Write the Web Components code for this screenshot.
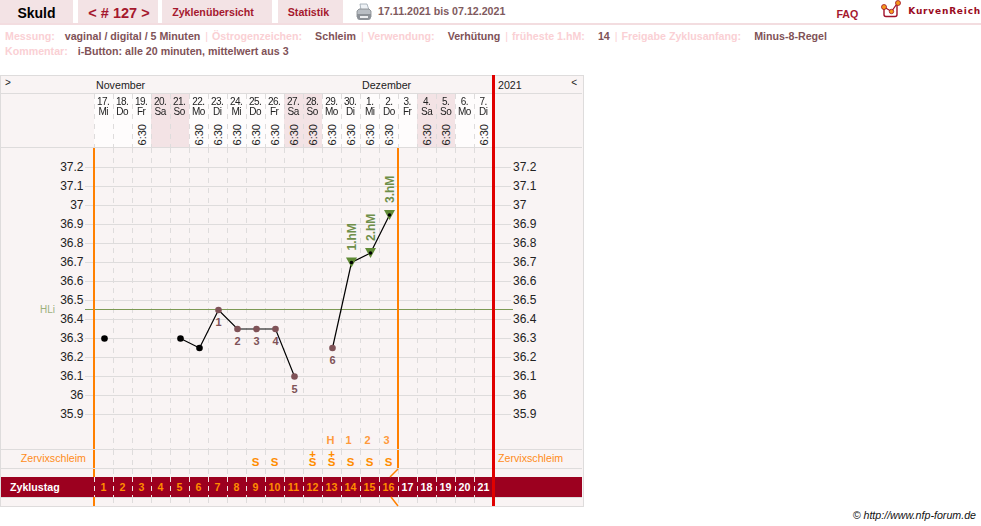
<!DOCTYPE html>
<html lang="de">
<head>
<meta charset="utf-8">
<title>Skuld</title>
<style>
    html, body { margin: 0; background: #fff; font-family: "Liberation Sans", Arial, sans-serif; }
</style>
</head>
<body>
<top-bar></top-bar>
<info-line>
    <info-item tight label="Messung:" value="vaginal / digital / 5 Minuten"></info-item>
    <info-item label="Östrogenzeichen:" value="Schleim"></info-item>
    <info-item label="Verwendung:" value="Verhütung"></info-item>
    <info-item label="früheste 1.hM:" value="14"></info-item>
    <info-item label="Freigabe Zyklusanfang:" value="Minus-8-Regel" last></info-item>
    <br>
    <info-item tight label="Kommentar:" value="i-Button: alle 20 minuten, mittelwert aus 3" last></info-item>
</info-line>
<cycle-chart></cycle-chart>
<page-footer>© http://www.nfp-forum.de</page-footer>

<script>
class NavTab extends HTMLElement {
    constructor() {
        super();
        this.attachShadow({ mode: "open" });
        this.shadowRoot.innerHTML = `
            <style>
                :host {
                    display: flex;
                    align-items: center;
                    justify-content: center;
                    height: 23px;
                    background: #f3e3e5;
                    color: #a5182e;
                    font-size: 10.67px;
                    font-weight: bold;
                    box-sizing: border-box;
                    padding-top: 1px;
                }
            </style>
            <slot></slot>
        `;
    }
}
customElements.define("nav-tab", NavTab);

class TopBar extends HTMLElement {
    constructor() {
        super();
        this.attachShadow({ mode: "open" });
        this.shadowRoot.innerHTML = `
            <style>
                :host {
                    display: flex;
                    align-items: center;
                    height: 23px;
                    border-bottom: 2px solid #f3dde0;
                    width: 981px;
                }
                .skuld { width: 73px; margin-right: 5px; color: #000; font-size: 14px; padding-top: 3px; }
                .cycle { width: 80px; margin-right: 4px; font-size: 14.5px; padding: 3px 0 0 2px; }
                .overview { width: 110px; margin-right: 6px; padding-right: 8px; }
                .stats { width: 65px; margin-right: 12px; padding-right: 4px; }
                .printer { display: block; width: 18px; height: 18px; margin-right: 5px; }
                .range { color: #7f5a5e; font-size: 10.67px; font-weight: bold; padding-bottom: 1px; }
                .faq { margin-left: auto; margin-right: 23px; padding-top: 5px; color: #a5182e; font-size: 10.67px; font-weight: bold; }
                .logo { display: block; width: 22px; height: 20px; margin-right: 5px; align-self: flex-start; }
                .brand { padding-bottom: 2px; color: #9a0b22; font-family: "DejaVu Sans", sans-serif; font-size: 9px; font-weight: bold; letter-spacing: .8px; }
            </style>
            <nav-tab class="skuld">Skuld</nav-tab>
            <nav-tab class="cycle">&lt; # 127 &gt;</nav-tab>
            <nav-tab class="overview">Zyklenübersicht</nav-tab>
            <nav-tab class="stats">Statistik</nav-tab>
            <svg class="printer" viewBox="0 0 18 18">
                <path d="M5 1h7l2 6H6z" fill="#eef2f6" stroke="#9aa6b0" stroke-width=".8"/>
                <path d="M2 8l2-2h10l2 2v6H2z" fill="#b9bec4" stroke="#80868c" stroke-width=".8"/>
                <path d="M2 11h14v3a3 3 0 0 1-3 3H5a3 3 0 0 1-3-3z" fill="#8d9298"/>
                <path d="M5 13h8v2H5z" fill="#eceef0"/>
            </svg>
            <span class="range">17.11.2021 bis 07.12.2021</span>
            <span class="faq">FAQ</span>
            <svg class="logo" viewBox="0 0 22 20">
                <path d="M3 8v6.500q0 2 2 2h9q2 0 2-2V5" fill="#fff" stroke="#a0102a" stroke-width="1.400"/>
                <path d="M3 7l7.500 4.500L16.500 3" fill="none" stroke="#a0102a" stroke-width="1.300"/>
                <circle cx="3" cy="7" r="2.500" fill="#f59a1c" stroke="#a0102a" stroke-width=".8"/>
                <circle cx="10.500" cy="11.500" r="2.200" fill="#f59a1c" stroke="#a0102a" stroke-width=".8"/>
                <circle cx="17" cy="3" r="2.500" fill="#f59a1c" stroke="#a0102a" stroke-width=".8"/>
            </svg>
            <span class="brand">KurvenReich</span>
        `;
    }
}
customElements.define("top-bar", TopBar);

class InfoLine extends HTMLElement {
    constructor() {
        super();
        this.attachShadow({ mode: "open" });
        this.shadowRoot.innerHTML = `
            <style>
                :host {
                    display: block;
                    height: 50px;
                    padding: 4px 0 0 5px;
                    box-sizing: border-box;
                    font-size: 10.67px;
                    font-weight: bold;
                    line-height: 15px;
                    white-space: nowrap;
                }
            </style>
            <slot></slot>
        `;
    }
}
customElements.define("info-line", InfoLine);

class InfoItem extends HTMLElement {
    constructor() {
        super();
        this.attachShadow({ mode: "open" });
        this.shadowRoot.innerHTML = `
            <style>
                :host { display: inline; }
                .label { color: #fad0d4; margin-right: 13px; }
                :host([tight]) .label { margin-right: 10px; }
                .value { color: #7f5257; }
                .sep { color: #fad0d4; font-weight: normal; margin: 0 1px 0 5px; }
            </style>
            <span class="label"></span><span class="value"></span><span class="sep">|</span>
        `;
    }

    connectedCallback() {
        this.shadowRoot.querySelector(".label").textContent = this.getAttribute("label");
        this.shadowRoot.querySelector(".value").textContent = this.getAttribute("value");
        if (this.hasAttribute("last")) {
            this.shadowRoot.querySelector(".sep").style.display = "none";
        }
    }
}
customElements.define("info-item", InfoItem);

const DAYS = [
    ["17.", "Mi", 0], ["18.", "Do", 0], ["19.", "Fr", 1], ["20.", "Sa", 0], ["21.", "So", 0],
    ["22.", "Mo", 1], ["23.", "Di", 1], ["24.", "Mi", 1], ["25.", "Do", 1], ["26.", "Fr", 1],
    ["27.", "Sa", 1], ["28.", "So", 1], ["29.", "Mo", 1], ["30.", "Di", 1], ["1.", "Mi", 1],
    ["2.", "Do", 1], ["3.", "Fr", 0], ["4.", "Sa", 1], ["5.", "So", 1], ["6.", "Mo", 0], ["7.", "Di", 1],
];

// day index, temperature, label under the point
const SERIES = [
    [[0, 36.3]],
    [[4, 36.3], [5, 36.25], [6, 36.45, "1"], [7, 36.35, "2"], [8, 36.35, "3"], [9, 36.35, "4"], [10, 36.1, "5"]],
    [[12, 36.25, "6"], [13, 36.7, "1.hM"], [14, 36.75, "2.hM"], [15, 36.95, "3.hM"]],
];

const MUCUS = { 8: "S", 9: "S", 11: "+\nS", 12: "+\nS", 13: "S", 14: "S", 15: "S" };

const dayX = (i) => 104.5 + 19 * i;
const tempY = (t) => 167.5 + (37.2 - t) * 190;

function plotSvg() {
    let out = "";
    for (let k = 0; k < 14; k++) {
        const y = 167 + 19 * k;
        const t = (37.2 - k / 10).toFixed(1).replace(/\.0$/, "");
        out += `<path d="M85 ${y + .5}H511" stroke="#dedcdc"/>`;
        out += `<text x="83.500" y="${y + 4}" text-anchor="end" class="t">${t}</text>`;
        out += `<text x="513" y="${y + 4}" class="t">${t}</text>`;
    }
    for (let i = 1; i < 21; i++) {
        const x = 94 + 19 * i + .5;
        out += `<path d="M${x} 148V449" stroke="#dedcdc" stroke-dasharray="5 5"/>`;
    }
    out += `<path d="M85 309.500H513" stroke="#7d9a55"/>`;
    out += `<text x="40" y="313" class="hli">HLi</text>`;

    SERIES.forEach((s) => {
        if (s.length > 1) {
            const pts = s.map((p) => `${dayX(p[0])},${tempY(p[1])}`).join(" ");
            out += `<polyline points="${pts}" fill="none" stroke="#000" stroke-width="1.200"/>`;
        }
        s.forEach((p) => {
            const x = dayX(p[0]);
            const y = tempY(p[1]);
            const name = p[2];
            if (!name) {
                out += `<circle cx="${x}" cy="${y}" r="3.300" fill="#000"/>`;
            } else if (name.includes("hM")) {
                out += `<path d="M${x - 5.5} ${y - 5}h11l-5.500 10z" fill="#5f8a35"/>`;
                out += `<circle cx="${x}" cy="${y}" r="1.800" fill="#000"/>`;
                out += `<text transform="translate(${x + 4} ${y - 12}) rotate(-90)" class="hm">${name}</text>`;
            } else {
                out += `<circle cx="${x}" cy="${y}" r="3.300" fill="#7f5257"/>`;
                out += `<text x="${x}" y="${y + 16}" text-anchor="middle" class="n">${name}</text>`;
            }
        });
    });

    [["H", 12, 2], ["1", 13, 3], ["2", 14, 3], ["3", 15, 3]].forEach(([c, i, off]) => {
        out += `<text x="${dayX(i) - off}" y="444" text-anchor="middle" class="peak">${c}</text>`;
    });
    return out;
}

class CycleChart extends HTMLElement {
    constructor() {
        super();
        this.attachShadow({ mode: "open" });
        const heads = DAYS.map(([d, w, time]) => {
            const weekend = w == "Sa" || w == "So";
            return `<div class="day${weekend ? " weekend" : ""}"><div class="date">${d}<br>${w}</div>${time ? "<span>6:30</span>" : ""}</div>`;
        }).join("");
        const mucus = DAYS.map((_, i) => {
            const v = MUCUS[i] || "";
            return `<div class="cell mucus${v == "S" ? " single" : ""}">${v}</div>`;
        }).join("");
        const blanks = DAYS.map(() => `<div class="cell"></div>`).join("");
        const numbers = DAYS.map((_, i) => `<div class="num${i > 15 ? " white" : ""}">${i + 1}</div>`).join("");

        this.shadowRoot.innerHTML = `
            <style>
                :host {
                    display: block;
                    position: relative;
                    width: 584px;
                    height: 432px;
                    box-sizing: border-box;
                    border: 1px solid #dedcdc;
                    background: #f9f4f4;
                    color: #222;
                    font-size: 10.67px;
                }
                .grid {
                    display: grid;
                    grid-template-columns: 93px repeat(21, 19px) 89px;
                    grid-template-rows: 17px 1px 53px 1px 301px 1px 18px 1px 8px 20px 1px 9px;
                }
                .rule { grid-column: 1 / -1; background: #dedcdc; }
                .month { grid-column: span 14; padding-left: 2px; line-height: 18px; }
                .month.dec { grid-column: span 7; }
                .edge { padding-left: 4px; line-height: 14px; font-size: 10px; }
                .edge.year { display: flex; justify-content: space-between; padding: 0 5px 0 5px; line-height: 18px; font-size: 10.67px; }
                .edge.year b { font-weight: normal; font-size: 10px; line-height: 14px; }
                .day {
                    background-color: #fefcfc;
                    text-align: center;
                    line-height: 10px;
                    font-size: 10px;
                    letter-spacing: -.5px;
                    padding-top: 3px;
                    box-sizing: border-box;
                    display: flex;
                    flex-direction: column;
                    align-items: center;
                    justify-content: space-between;
                }
                .date { will-change: transform; }
                .day, .cell {
                    background-image: repeating-linear-gradient(#dedcdc 0 5px, transparent 5px 10px);
                    background-size: 1px 100%;
                    background-repeat: no-repeat;
                }
                .day.weekend { background-color: #f3e3e5; }
                .day span {
                    writing-mode: vertical-rl;
                    transform: rotate(180deg);
                    font-size: 11px;
                    letter-spacing: 0;
                    line-height: 11px;
                    margin: 0 0 2px 1px;
                }
                .plot { grid-column: 1 / -1; display: block; width: 582px; height: 301px; }
                .plot .t { font-size: 12px; fill: #222; }
                .plot .hli { font-size: 10px; fill: #7d9a55; opacity: .75; }
                .plot .n { font-size: 11px; fill: #7f5257; font-weight: bold; }
                .plot .hm { font-size: 12px; fill: #6f8f4a; font-weight: bold; }
                .plot .peak { font-size: 11px; fill: #ff9a3c; font-weight: bold; }
                .label { color: #ff8c1a; text-align: right; padding-right: 8px; line-height: 16px; }
                .label.right { text-align: left; padding: 0 0 0 5px; }
                .mucus {
                    color: #ff8c00;
                    font-size: 11.5px;
                    font-weight: bold;
                    line-height: 8px;
                    text-align: center;
                    white-space: pre;
                    box-sizing: border-box;
                }
                .mucus.single { padding-top: 8px; }
                .bar { background: #9c001f; }
                .title { color: #fff; font-weight: bold; line-height: 20px; padding-left: 9px; }
                .num {
                    background: #9c001f repeating-linear-gradient(#efe6e6 0 5px, transparent 5px 9px) left / 1px 100% no-repeat;
                    color: #ff8c00;
                    font-weight: bold;
                    line-height: 20px;
                    text-align: center;
                }
                .num.white { color: #fff; }
                .accents { position: absolute; left: -1px; top: -1px; width: 584px; height: 432px; pointer-events: none; }
            </style>
            <div class="grid">
                <div class="edge">&gt;</div>
                <div class="month">November</div>
                <div class="month dec">Dezember</div>
                <div class="edge year">2021<b>&lt;</b></div>
                <div class="rule"></div>

                <div></div>${heads}<div></div>
                <div class="rule"></div>

                <svg class="plot" viewBox="1 148 582 301">${plotSvg()}</svg>
                <div class="rule"></div>

                <div class="label">Zervixschleim</div>${mucus}<div class="label right">Zervixschleim</div>
                <div class="rule"></div>

                <div></div>${blanks}<div></div>

                <div class="bar title">Zyklustag</div>${numbers}<div class="bar"></div>
                <div class="rule"></div>

                <div></div>${blanks}<div></div>
            </div>
            <svg class="accents" viewBox="0 75 584 432">
                <g stroke="#ff8000" fill="none" stroke-width="2">
                    <path d="M94 148V449M94 450V468M94 469V477M94 497V506"/>
                    <path d="M398 148V449M398 450V468"/>
                    <path stroke-width="1.500" d="M398 469L390 477M391 497L398 506"/>
                </g>
                <path d="M493.500 75V506" stroke="#e00000" stroke-width="3"/>
            </svg>
        `;
    }
}
customElements.define("cycle-chart", CycleChart);

class PageFooter extends HTMLElement {
    constructor() {
        super();
        this.attachShadow({ mode: "open" });
        this.shadowRoot.innerHTML = `
            <style>
                :host {
                    display: block;
                    width: 976px;
                    padding-top: 1px;
                    color: #111;
                    font-size: 10.67px;
                    font-style: italic;
                    line-height: 14px;
                    text-align: right;
                }
            </style>
            <slot></slot>
        `;
    }
}
customElements.define("page-footer", PageFooter);
</script>
</body>
</html>
